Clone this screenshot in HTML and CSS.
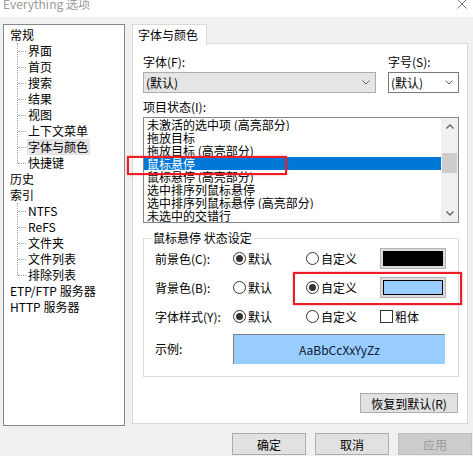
FILE: index.html
```
<!DOCTYPE html>
<html lang="zh-CN">
<head>
<meta charset="utf-8">
<title>Everything 选项</title>
<link rel="stylesheet" href="styles.css">
</head>
<body>
<div class="titlebar">
  <span class="title">Everything 选项</span>
  <svg class="close" width="10" height="10" viewBox="0 0 10 10"><path d="M0.5 0.5L9.5 9.5M9.5 0.5L0.5 9.5" stroke="#7a7a7a" stroke-width="1" fill="none"/></svg>
</div>
<div class="main">
  <ul class="tree">
    <li><span class="lbl">常规</span>
      <ul class="kids">
        <li><span class="lbl">界面</span></li>
        <li><span class="lbl">首页</span></li>
        <li><span class="lbl">搜索</span></li>
        <li><span class="lbl">结果</span></li>
        <li><span class="lbl">视图</span></li>
        <li><span class="lbl">上下文菜单</span></li>
        <li><span class="lbl sel">字体与颜色</span></li>
        <li><span class="lbl">快捷键</span></li>
      </ul>
    </li>
    <li><span class="lbl">历史</span></li>
    <li><span class="lbl">索引</span>
      <ul class="kids">
        <li><span class="lbl">NTFS</span></li>
        <li><span class="lbl">ReFS</span></li>
        <li><span class="lbl">文件夹</span></li>
        <li><span class="lbl">文件列表</span></li>
        <li><span class="lbl">排除列表</span></li>
      </ul>
    </li>
    <li><span class="lbl">ETP/FTP 服务器</span></li>
    <li><span class="lbl">HTTP 服务器</span></li>
  </ul>
  <div class="panel">
    <div class="tabs"><div class="tab">字体与颜色</div></div>
    <div class="panel-body">
      <div class="fontrow">
        <div class="label">字体(F):</div>
        <div class="label">字号(S):</div>
        <div class="combo disabled"><span>(默认)</span><svg width="8" height="5" viewBox="0 0 8 5"><path d="M0.5 0.5L4 4L7.5 0.5" stroke="#606060" fill="none"/></svg></div>
        <div class="combo"><span>(默认)</span><svg width="8" height="5" viewBox="0 0 8 5"><path d="M0.5 0.5L4 4L7.5 0.5" stroke="#606060" fill="none"/></svg></div>
      </div>
      <div class="label state-label">项目状态(I):</div>
      <div class="listbox">
        <div class="items">
          <div class="row">未激活的选中项 (高亮部分)</div>
          <div class="row">拖放目标</div>
          <div class="row">拖放目标 (高亮部分)</div>
          <div class="row sel">鼠标悬停</div>
          <div class="row">鼠标悬停 (高亮部分)</div>
          <div class="row">选中排序列鼠标悬停</div>
          <div class="row">选中排序列鼠标悬停 (高亮部分)</div>
          <div class="row">未选中的交错行</div>
        </div>
        <div class="scrollbar">
          <div class="sb-btn"><svg width="8" height="5" viewBox="0 0 8 5"><path d="M0.5 4.5L4 1L7.5 4.5" stroke="#606060" stroke-width="1.3" fill="none"/></svg></div>
          <div class="sb-track"><div class="thumb"></div></div>
          <div class="sb-btn"><svg width="8" height="5" viewBox="0 0 8 5"><path d="M0.5 0.5L4 4L7.5 0.5" stroke="#606060" stroke-width="1.3" fill="none"/></svg></div>
        </div>
      </div>
      <fieldset class="group">
        <legend>鼠标悬停 状态设定</legend>
        <div class="group-inner">
          <div class="grid">
            <div class="label">前景色(C):</div>
            <div class="opt"><span class="radio on"></span>默认</div>
            <div class="opt"><span class="radio"></span>自定义</div>
            <div class="swatch"><div class="swatch-fill black"></div></div>

            <div class="label">背景色(B):</div>
            <div class="opt"><span class="radio"></span>默认</div>
            <div class="opt"><span class="radio on"></span>自定义</div>
            <div class="swatch"><div class="swatch-fill blue"></div></div>

            <div class="label">字体样式(Y):</div>
            <div class="opt"><span class="radio on"></span>默认</div>
            <div class="opt"><span class="radio"></span>自定义</div>
            <div class="opt"><span class="check"></span>粗体</div>
          </div>
          <div class="example">
            <div class="label ex-label">示例:</div>
            <div class="sample">AaBbCcXxYyZz</div>
          </div>
        </div>
      </fieldset>
      <div class="btn restore">恢复到默认(R)</div>
    </div>
  </div>
</div>
<div class="footer">
  <div class="btn">确定</div>
  <div class="btn">取消</div>
  <div class="btn off">应用</div>
</div>
<div class="mark mark-row"></div>
<div class="mark mark-bg"></div>
</body>
</html>
```
FILE: styles.css
```
* { box-sizing: border-box; }
body {
  margin: 0;
  width: 473px;
  height: 456px;
  overflow: hidden;
  position: relative;
  background: #f0f0f0;
  font-family: "Noto Sans CJK SC", "Noto Sans", sans-serif;
  font-size: 12px;
  color: #000;
}
.titlebar {
  height: 17px;
  background: #fff;
  display: flex;
  justify-content: space-between;
  align-items: flex-start;
  padding: 0 6px 0 3px;
  line-height: 8px;
  color: #9a9a9a;
}
.close { margin-top: -1px; }
.main {
  display: flex;
  align-items: flex-start;
  gap: 7px;
  padding: 7px 0 0 3px;
}
.tree {
  width: 122px;
  height: 402px;
  margin: 0;
  list-style: none;
  border: 1px solid #828790;
  background: #fff;
  padding: 2px 0 0 5px;
}
.tree li { line-height: 16px; height: auto; }
.tree > li > .lbl, .kids > li > .lbl { display: inline-block; height: 16px; padding: 0 2px 0 1px; }
.lbl.sel { background: #e5e5e5; }
.kids {
  list-style: none;
  margin: 0;
  padding: 0 0 0 18px;
  position: relative;
}
.kids::before {
  content: "";
  position: absolute;
  left: 8px;
  top: 0;
  bottom: 8px;
  border-left: 1px dotted #a0a0a0;
}
.kids > li { position: relative; }
.kids > li::before {
  content: "";
  position: absolute;
  left: -9px;
  top: 8px;
  width: 8px;
  border-top: 1px dotted #a0a0a0;
}
.panel { width: 336px; }
.tabs { display: flex; height: 20px; margin-bottom: -1px; }
.tab {
  position: relative;
  z-index: 1;
  width: 75px;
  height: 21px;
  border: 1px solid #d9d9d9;
  border-bottom: none;
  background: #fff;
  padding-left: 5px;
  line-height: 19px;
}
.panel-body {
  height: 381px;
  border: 1px solid #d9d9d9;
  background: #fff;
  padding: 11px 8px 10px 10px;
  display: flex;
  flex-direction: column;
}
.label { line-height: 14px; white-space: nowrap; }
.fontrow {
  display: grid;
  grid-template-columns: 233px 71px;
  column-gap: 12px;
  row-gap: 3px;
}
.combo {
  height: 21px;
  border: 1px solid #7a7a7a;
  background: #fff;
  display: flex;
  align-items: center;
  justify-content: space-between;
  padding: 0 5px 0 2px;
}
.combo.disabled { border-color: #adadad; background: #e5e5e5; }
.state-label { margin-top: 7px; }
.listbox {
  margin-top: 3px;
  height: 106px;
  border: 1px solid #828790;
  display: flex;
}
.items { flex: 1; overflow: hidden; min-width: 0; }
.row {
  height: 13px;
  line-height: 13px;
  padding-left: 3px;
  white-space: nowrap;
  overflow: hidden;
}
.row.sel { background: #0078d7; color: #fff; }
.scrollbar {
  width: 17px;
  background: #f0f0f0;
  display: flex;
  flex-direction: column;
}
.sb-btn { height: 17px; display: flex; align-items: center; justify-content: center; }
.sb-track { flex: 1; padding-top: 18px; }
.thumb { height: 20px; margin: 0 1px; background: #cdcdcd; }
.group {
  margin: 8px 0 0;
  padding: 0;
  min-width: 0;
  border: 1px solid #dcdcdc;
}
.group legend {
  margin-left: 7px;
  padding: 0 2px;
  line-height: 14px;
  font-size: 12px;
}
.group-inner { padding: 3px 0 12px 11px; }
.grid {
  display: grid;
  grid-template-columns: 78px 73px 74px 66px;
  grid-template-rows: 21px 21px 21px;
  row-gap: 8px;
  align-items: center;
}
.opt { display: flex; align-items: center; gap: 2px; white-space: nowrap; }
.radio {
  width: 13px;
  height: 13px;
  border: 1px solid #333;
  border-radius: 50%;
  background: #fff;
  display: inline-flex;
  align-items: center;
  justify-content: center;
  flex: none;
}
.radio.on::after {
  content: "";
  width: 7px;
  height: 7px;
  border-radius: 50%;
  background: #333;
}
.check {
  width: 13px;
  height: 13px;
  border: 1px solid #333;
  background: #fff;
  flex: none;
}
.swatch {
  width: 66px;
  height: 21px;
  border: 1px solid #b4b4b4;
  background: #dcdcdc;
  padding: 2px;
}
.swatch-fill { height: 100%; border: 1px solid #000; }
.swatch-fill.black { background: #000; }
.swatch-fill.blue { background: #99ccff; }
.example { display: flex; align-items: center; margin-top: 7px; }
.ex-label { width: 78px; }
.sample {
  width: 212px;
  height: 30px;
  background: #99ccff;
  border-top: 1px solid #828282;
  border-left: 1px solid #828282;
  display: flex;
  align-items: center;
  justify-content: center;
  color: #0c1830;
}
.btn {
  height: 22px;
  width: 74px;
  border: 1px solid #adadad;
  background: #e1e1e1;
  display: flex;
  align-items: center;
  justify-content: center;
  white-space: nowrap;
}
.btn.off { background: #cccccc; border-color: #bfbfbf; color: #9a9a9a; }
.restore { align-self: flex-end; width: 98px; height: 20px; margin-top: 16px; margin-right: 1px; }
.footer {
  display: flex;
  gap: 9px;
  padding-left: 232px;
  margin-top: 7px;
}
.mark {
  position: absolute;
  border: 2px solid #ee1c25;
  box-shadow: 0 0 2px rgba(255, 0, 0, 0.45);
}
.mark-row { left: 127px; top: 156px; width: 160px; height: 19px; }
.mark-bg { left: 293px; top: 272px; width: 169px; height: 33px; }
```
